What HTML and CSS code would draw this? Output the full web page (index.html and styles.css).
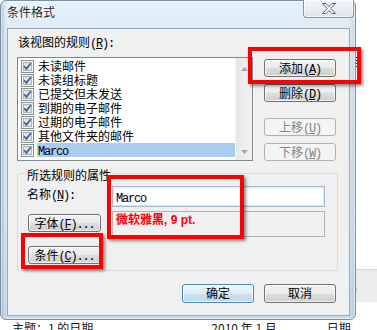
FILE: index.html
```html
<!DOCTYPE html>
<html lang="zh-CN">
<head>
<meta charset="utf-8">
<title>条件格式</title>
<link rel="stylesheet" href="styles.css">
</head>
<body>
<svg class="defs" width="0" height="0" aria-hidden="true">
  <symbol id="chk" viewBox="0 0 13 13">
    <rect x="0.5" y="0.5" width="12" height="12" fill="#f4f4f4" stroke="#8e8f8f"/>
    <rect x="2.5" y="2.5" width="8" height="8" fill="#dfe2e6" stroke="#b0b4ba"/>
    <path d="M3.2 6.2 L5.4 8.8 L9.8 3.3" fill="none" stroke="#4a5e8a" stroke-width="1.7"/>
  </symbol>
</svg>
<div class="page">
  <div class="scene">
    <div class="window">
      <div class="titlebar">
        <span class="title">条件格式</span>
        <span class="close">
          <svg width="14" height="11" viewBox="0 0 14 11"><path d="M0.5 0.5 h3.5 l3 3 l3 -3 h3.5 l-4.7 5 l4.7 5 h-3.5 l-3 -3 l-3 3 h-3.5 l4.7 -5 z" fill="#f2f5f8" stroke="#5d6876" stroke-width="1"/></svg>
        </span>
      </div>
      <div class="client">
        <div class="caption">该视图的规则<span class="m">(<u>R</u>):</span></div>
        <div class="rules">
          <div class="list">
            <ul class="items">
              <li class="row"><svg class="cb"><use href="#chk"/></svg><span class="txt">未读邮件</span></li>
              <li class="row"><svg class="cb"><use href="#chk"/></svg><span class="txt">未读组标题</span></li>
              <li class="row"><svg class="cb"><use href="#chk"/></svg><span class="txt">已提交但未发送</span></li>
              <li class="row"><svg class="cb"><use href="#chk"/></svg><span class="txt">到期的电子邮件</span></li>
              <li class="row"><svg class="cb"><use href="#chk"/></svg><span class="txt">过期的电子邮件</span></li>
              <li class="row"><svg class="cb"><use href="#chk"/></svg><span class="txt">其他文件夹的邮件</span></li>
              <li class="row sel"><svg class="cb"><use href="#chk"/></svg><span class="txt"><span class="m">Marco</span></span></li>
            </ul>
            <div class="vscroll">
              <svg width="7" height="4" viewBox="0 0 7 4"><path d="M0 4 L3.5 0 L7 4 Z" fill="#a7a7a7"/></svg>
              <svg width="7" height="4" viewBox="0 0 7 4"><path d="M0 0 L3.5 4 L7 0 Z" fill="#a7a7a7"/></svg>
            </div>
          </div>
          <div class="side">
            <button class="btn">添加<span class="m">(<u>A</u>)</span></button>
            <button class="btn">删除<span class="m">(<u>D</u>)</span></button>
            <button class="btn dis sep">上移<span class="m">(<u>U</u>)</span></button>
            <button class="btn dis">下移<span class="m">(<u>W</u>)</span></button>
          </div>
        </div>
        <div class="group">
          <div class="legend">所选规则的属性</div>
          <div class="prop name-row">
            <span class="plabel">名称<span class="m">(<u>N</u>):</span></span>
            <div class="textbox"><span class="m">Marco</span></div>
          </div>
          <div class="prop font-row">
            <button class="btn pbtn">字体<span class="m">(<u>F</u>)...</span></button>
            <div class="fontbox">微软雅黑, 9 pt.</div>
          </div>
          <div class="prop cond-row">
            <button class="btn pbtn">条件<span class="m">(<u>C</u>)...</span></button>
          </div>
        </div>
        <div class="actions">
          <button class="btn act default">确定</button>
          <button class="btn act">取消</button>
        </div>
      </div>
    </div>
    <div class="backdrop-right">
      <span class="bg-glyph top-glyph">目</span>
      <div class="bg-band"><span class="bg-glyph">0</span></div>
    </div>
  </div>
  <div class="backdrop-bottom">
    <span class="bt bt1">主题：1 的日期</span>
    <span class="bt bt2">2010 年 1 月</span>
    <span class="bt bt3">日期</span>
  </div>
  <div class="mark mark-add"></div>
  <div class="mark mark-props"></div>
  <div class="mark mark-cond"></div>
</div>
</body>
</html>
```

FILE: styles.css
```css
* { box-sizing: border-box; }
html, body { margin: 0; padding: 0; }
body {
  width: 377px;
  height: 330px;
  overflow: hidden;
  background: #ffffff;
  font-family: "Noto Sans CJK SC", "Noto Sans", sans-serif;
  font-size: 12px;
  line-height: 14px;
  color: #000;
}
.defs { position: absolute; width: 0; height: 0; overflow: hidden; }
.page { position: relative; width: 377px; height: 330px; overflow: hidden; }
.m {
  font-family: "Liberation Mono", monospace;
  font-size: 12px;
  letter-spacing: -1.2px;
}
u { text-decoration-thickness: 1px; text-underline-offset: 1px; }

.scene { display: flex; height: 320px; }

.window {
  flex: none;
  width: 356px;
  height: 320px;
  display: flex;
  flex-direction: column;
  padding: 0 5px 3px 6px;
  border: 1px solid #7f8e9c;
  border-radius: 6px;
  background:
    linear-gradient(90deg, rgba(112,134,156,.5) 0, rgba(180,198,214,.3) 3px, rgba(255,255,255,0) 6px, rgba(255,255,255,0) calc(100% - 6px), rgba(150,172,192,.35) 100%),
    linear-gradient(180deg, #e6f2fa 0, #deebf5 28px, #d8e6f2 70%, #c8dcee 100%);
  box-shadow: inset 0 0 0 1px rgba(255,255,255,.55);
}
.titlebar {
  flex: none;
  height: 27px;
  display: flex;
  justify-content: space-between;
  align-items: flex-start;
}
.title {
  margin-top: 4px;
  color: #1e1e1e;
  text-shadow: 0 0 6px #fff, 0 0 3px #fff;
}
.close {
  width: 51px;
  height: 18px;
  margin: -1px -4px 0 0;
  border: 1px solid #8795a4;
  border-top: none;
  border-radius: 0 0 4px 4px;
  background: linear-gradient(#f3f7fa, #dbe5ee);
  box-shadow: inset 0 0 0 1px rgba(255,255,255,.7);
  display: flex;
  align-items: center;
  justify-content: center;
}

.client {
  flex: none;
  width: 343px;
  height: 288px;
  border: 1px solid #97a8b8;
  background: #f0f0f0;
  padding-left: 9px;
  display: flex;
  flex-direction: column;
}
.caption { flex: none; margin: 6px 0 0 1px; }

.rules { flex: none; display: flex; margin-top: 6px; }
.list {
  flex: none;
  width: 236px;
  height: 104px;
  border: 1px solid #828790;
  background: #fff;
  display: flex;
}
.items {
  flex: 1;
  list-style: none;
  margin: 0;
  padding: 1px 0 0 3px;
}
.row { display: flex; align-items: center; height: 14px; }
.cb { flex: none; width: 13px; height: 13px; margin-right: 3px; }
.txt { flex: 1; height: 14px; padding-left: 1px; white-space: nowrap; }
.sel .txt { background: #a9cdf0; }
.vscroll {
  flex: none;
  width: 17px;
  background: linear-gradient(90deg, #e6e6e6, #ededed 40%, #f0f0f0);
  border-left: 1px solid #f6f6f6;
  display: flex;
  flex-direction: column;
  justify-content: space-between;
  align-items: center;
  padding: 9px 0 6px;
}

.side {
  flex: none;
  display: flex;
  flex-direction: column;
  gap: 7px;
  margin-left: 11px;
  padding-top: 2px;
}
.btn {
  flex: none;
  width: 72px;
  height: 18px;
  padding: 0 0 1px;
  margin: 0;
  font: inherit;
  line-height: 15px;
  color: #000;
  text-align: center;
  border: 1px solid #707070;
  border-radius: 3px;
  background: linear-gradient(#f2f2f2 0%, #ebebeb 50%, #dddddd 51%, #cfcfcf 100%);
  box-shadow: inset 0 0 0 1px rgba(255,255,255,.75);
  white-space: nowrap;
}
.btn.dis {
  color: #838383;
  border-color: #adb2b5;
  background: #f4f4f4;
  box-shadow: none;
}
.btn.sep { margin-top: 9px; }

.group {
  flex: none;
  width: 321px;
  height: 98px;
  margin-top: 12px;
  border: 1px solid #d5dfe5;
  border-radius: 3px;
  padding-left: 10px;
}
.legend {
  width: fit-content;
  margin: -6px 0 0 -3px;
  padding: 0 2px;
  background: #f0f0f0;
}
.prop { display: flex; align-items: flex-start; }
.name-row { margin-top: 4px; }
.plabel { flex: none; width: 85px; margin: 1px 0 0 -1px; }
.textbox {
  flex: none;
  width: 213px;
  height: 21px;
  border: 1px solid #a2b9d2;
  box-shadow: inset 0 0 0 1px #dde8f3;
  background: #fff;
  padding: 3px 0 0 3px;
}
.font-row { margin-top: 4px; }
.pbtn { width: 73px; margin: 3px 11px 0 0; }
.fontbox {
  flex: none;
  width: 213px;
  height: 26px;
  border: 1px solid #b1b1b1;
  background: #f0f0f0;
  padding: 1px 0 0 3px;
  color: #ff0000;
  font-family: "Liberation Sans", "Noto Sans CJK SC", sans-serif;
  font-weight: bold;
}
.cond-row { margin-top: 6px; }

.actions {
  flex: none;
  display: flex;
  justify-content: flex-end;
  gap: 10px;
  margin-top: 13px;
  padding-right: 13px;
}
.btn.act { height: 19px; line-height: 16px; }
.btn.default {
  border-color: #4a84b3;
  background: linear-gradient(#eaf4fb 0%, #deebf5 50%, #cde1f0 51%, #c1d8ea 100%);
}

.backdrop-right {
  flex: 1;
  overflow: hidden;
  padding-top: 55px;
}
.bg-glyph { display: block; margin-left: -6px; color: #222; }
.bg-band {
  margin-top: 200px;
  height: 33px;
  background: #ececec;
  border-top: 1px solid #d6d6d6;
  padding-top: 12px;
}

.backdrop-bottom {
  height: 10px;
  overflow: hidden;
  display: flex;
  padding-top: 1px;
  color: #1a1a1a;
  white-space: nowrap;
}
.bt1 { margin-left: 12px; }
.bt2 { margin-left: 118px; }
.bt3 { margin-left: 50px; }

.mark {
  position: absolute;
  border: 4px solid #ff0000;
  box-shadow: 2px 2px 3px rgba(0,0,0,.45);
}
.mark-add { left: 248px; top: 47px; width: 113px; height: 37px; }
.mark-props { left: 107px; top: 175px; width: 137px; height: 64px; }
.mark-cond { left: 21px; top: 233px; width: 82px; height: 36px; }
```
